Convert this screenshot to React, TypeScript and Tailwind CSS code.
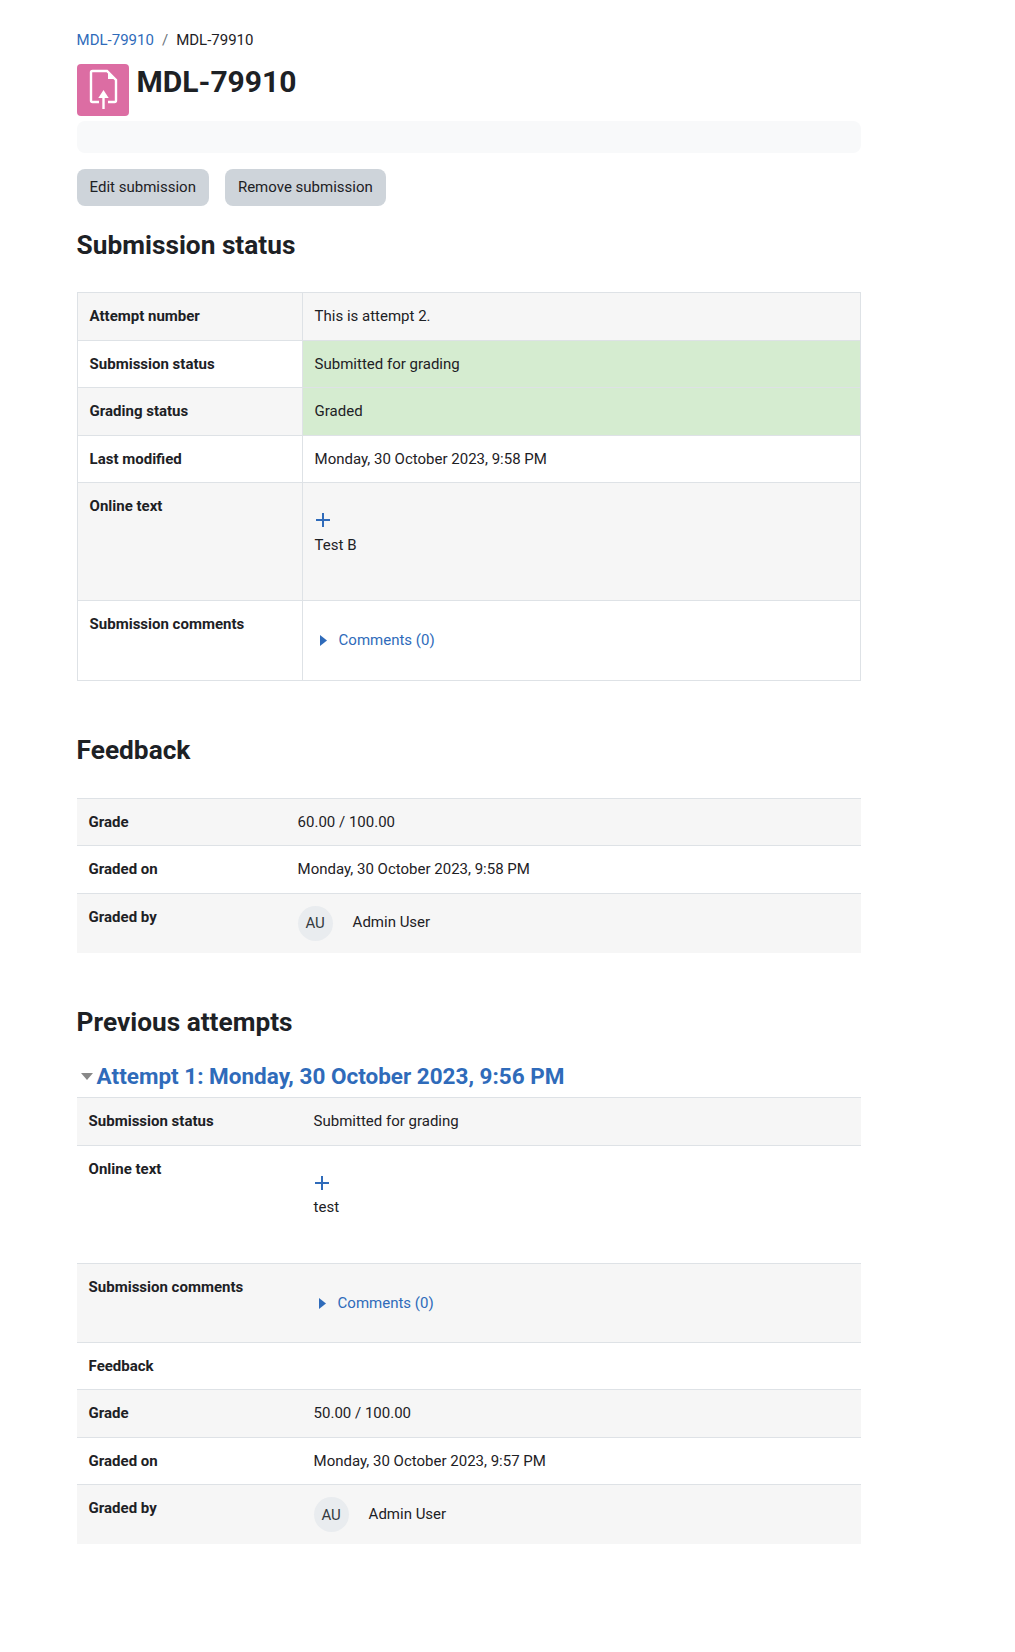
import React from 'react';

const th = "border-t border-[#dee2e6] pl-3 pr-3 py-3 text-left align-top font-bold";
const td = "border-t border-[#dee2e6] pl-3 pr-3 py-3 align-top font-normal";

const Avatar = () => (
  <div className="flex items-center">
    <span className="flex h-[35px] w-[35px] items-center justify-center rounded-full bg-[#e9ecef] text-[#343a40]">AU</span>
    <span className="ml-[20px] mb-[2px]">Admin User</span>
  </div>
);

const Caret = () => (
  <svg width="7" height="11" viewBox="0 0 7 11" className="fill-[#2f6bba]"><path d="M0 0l7 5.5-7 5.5z" /></svg>
);

const Plus = () => (
  <svg width="14" height="14" viewBox="0 0 14 14" className="stroke-[#2f6bba]" strokeWidth="2"><path d="M7 0v14M0 7h14" /></svg>
);

const Comments = () => (
  <a className="flex items-center text-[#2f6bba]">
    <span className="ml-[5px] mr-[12px] flex"><Caret /></span>
    Comments (0)
  </a>
);

type Row = { label: string; value: React.ReactNode; rowClass?: string; cellClass?: string };

const statusRows: Row[] = [
  { label: 'Attempt number', value: 'This is attempt 2.', rowClass: 'bg-[#f6f6f6]' },
  { label: 'Submission status', value: 'Submitted for grading', cellClass: 'bg-[#d5ecd0]' },
  { label: 'Grading status', value: 'Graded', rowClass: 'bg-[#f6f6f6]', cellClass: 'bg-[#d5ecd0]' },
  { label: 'Last modified', value: 'Monday, 30 October 2023, 9:58 PM' },
  {
    label: 'Online text',
    rowClass: 'bg-[#f6f6f6] h-[118px]',
    value: (
      <div className="pt-[18px]">
        <div className="ml-[1px] flex h-[14px] items-center"><Plus /></div>
        <div className="mt-[7px]">Test B</div>
      </div>
    ),
  },
  {
    label: 'Submission comments',
    rowClass: 'h-[80px]',
    value: <div className="pt-[16px]"><Comments /></div>,
  },
];

const attemptRows: Row[] = [
  { label: 'Submission status', value: 'Submitted for grading', rowClass: 'bg-[#f6f6f6]' },
  {
    label: 'Online text',
    rowClass: 'h-[118px]',
    value: (
      <div className="pt-[18px]">
        <div className="ml-[1px] flex h-[14px] items-center"><Plus /></div>
        <div className="mt-[6px]">test</div>
      </div>
    ),
  },
  {
    label: 'Submission comments',
    rowClass: 'bg-[#f6f6f6] h-[79px]',
    value: <div className="pt-[16px]"><Comments /></div>,
  },
  { label: 'Feedback', value: '' },
  { label: 'Grade', value: '50.00 / 100.00', rowClass: 'bg-[#f6f6f6]' },
  { label: 'Graded on', value: 'Monday, 30 October 2023, 9:57 PM' },
  { label: 'Graded by', value: <Avatar />, rowClass: 'bg-[#f6f6f6]' },
];

const feedbackRows: Row[] = [
  { label: 'Grade', value: '60.00 / 100.00', rowClass: 'bg-[#f6f6f6]' },
  { label: 'Graded on', value: 'Monday, 30 October 2023, 9:58 PM' },
  { label: 'Graded by', value: <Avatar />, rowClass: 'bg-[#f6f6f6]' },
];

const PlainTable = ({ rows, labelWidth }: { rows: Row[]; labelWidth: string }) => (
  <table className="w-full table-fixed border-collapse">
    <colgroup><col className={labelWidth} /><col /></colgroup>
    <tbody>
      {rows.map((r) => (
        <tr key={r.label} className={r.rowClass}>
          <th className={th}>{r.label}</th>
          <td className={td}>{r.value}</td>
        </tr>
      ))}
    </tbody>
  </table>
);

export default function App() {
  return (
    <div className="h-[1652px] bg-white pl-[76.6px] pt-[29px] font-['Roboto',sans-serif] text-[15px] leading-[22.5px] text-[#1d2125]">
      <div className="w-[784.4px]">
        <nav className="flex">
          <a className="text-[#2f6bba]">MDL-79910</a>
          <span className="px-[8px] text-[#6a737b]">/</span>
          <span>MDL-79910</span>
        </nav>

        <div className="mt-[12px] flex">
          <div className="flex h-[52px] w-[52px] items-center justify-center rounded-[4px] bg-[#dc6da3]">
            <svg width="52" height="52" viewBox="0 0 52 52" fill="none" stroke="white" strokeWidth="2.4">
              <path d="M22 38h-6.500a1.500 1.500 0 0 1-1.500-1.500V8.500A1.500 1.500 0 0 1 15.500 7H30l9 9v20.500a1.500 1.500 0 0 1-1.500 1.500H31" />
              <path d="M31 7.500V15h7.500z" fill="white" stroke="none" />
              <path d="M26.500 45V32" />
              <path d="M21.300 34l5.200-8 5.200 8z" fill="white" stroke="none" />
            </svg>
          </div>
          <h1 className="ml-[8px] text-[30px] font-bold leading-[36px]">MDL-79910</h1>
        </div>

        <div className="mt-[5px] h-[32px] rounded-[8px] bg-[#f8f9fa]" />

        <div className="mt-[16px] flex gap-[16px]">
          <button className="h-[37.5px] rounded-[8px] bg-[#ced4da] px-[13px]">Edit submission</button>
          <button className="h-[37.5px] rounded-[8px] bg-[#ced4da] px-[13px]">Remove submission</button>
        </div>

        <h2 className="mt-[24px] text-[26.25px] font-bold leading-[31.5px]">Submission status</h2>

        <table className="mt-[30.5px] w-full table-fixed border-collapse border border-[#dee2e6]">
          <colgroup><col className="w-[225px]" /><col /></colgroup>
          <tbody>
            {statusRows.map((r) => (
              <tr key={r.label} className={r.rowClass}>
                <th className={`${th} border-r`}>{r.label}</th>
                <td className={`${td} ${r.cellClass ?? ''}`}>{r.value}</td>
              </tr>
            ))}
          </tbody>
        </table>

        <h2 className="mt-[53.5px] text-[26.25px] font-bold leading-[31.5px]">Feedback</h2>
        <div className="mt-[31.7px]">
          <PlainTable rows={feedbackRows} labelWidth="w-[209px]" />
        </div>

        <h2 className="mt-[54.3px] text-[26.25px] font-bold leading-[31.5px]">Previous attempts</h2>

        <div className="mt-[24.6px] flex items-center text-[#2f6bba]">
          <svg width="12" height="7" viewBox="0 0 12 7" className="ml-[4px] mr-[4px] fill-[#888]"><path d="M0 0h12L6 7z" /></svg>
          <h3 className="text-[22.5px] font-bold leading-[27px]">Attempt 1: Monday, 30 October 2023, 9:56 PM</h3>
        </div>
        <div className="mt-[7.4px]">
          <PlainTable rows={attemptRows} labelWidth="w-[225px]" />
        </div>
      </div>
    </div>
  );
}
